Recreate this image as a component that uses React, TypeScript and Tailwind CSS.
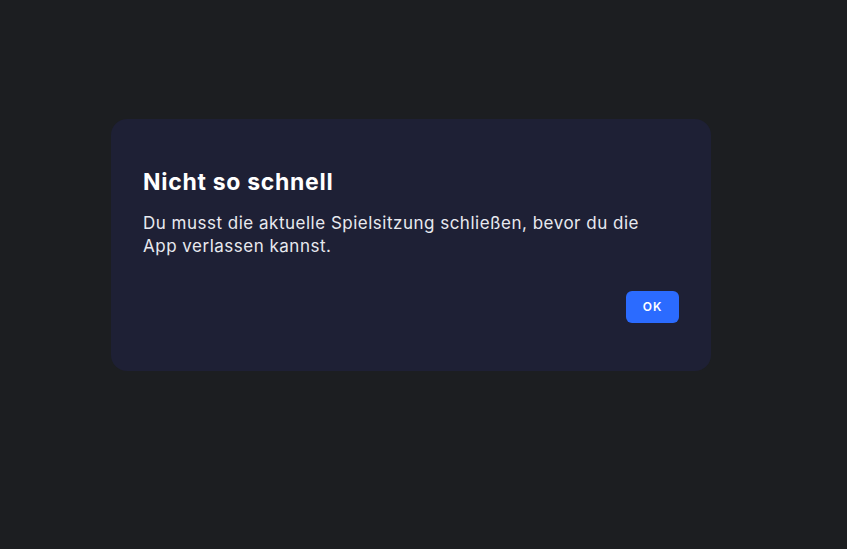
export default function App() {
  return (
    <div className="w-[847px] h-[549px] bg-[#1c1e21] flex items-start pl-[111px] pt-[119px] font-['Inter','Noto_Sans',sans-serif]">
      <div className="w-[600px] h-[252px] rounded-2xl bg-[#1e2035] px-8 pt-[48px] pb-12 flex flex-col">
        <h1 className="text-[23px] leading-[30px] font-bold tracking-[0.7px] text-white">Nicht so schnell</h1>
        <p className="mt-[15px] max-w-[510px] text-[17px] leading-[23px] tracking-[0.5px] text-[#e8e9ef]">
          Du musst die aktuelle Spielsitzung schließen, bevor du die App verlassen kannst.
        </p>
        <div className="mt-auto flex justify-end">
          <button className="w-[53px] h-8 rounded-md bg-[#2b6bff] text-white text-[12px] font-semibold tracking-[1px]">
            OK
          </button>
        </div>
      </div>
    </div>
  );
}
